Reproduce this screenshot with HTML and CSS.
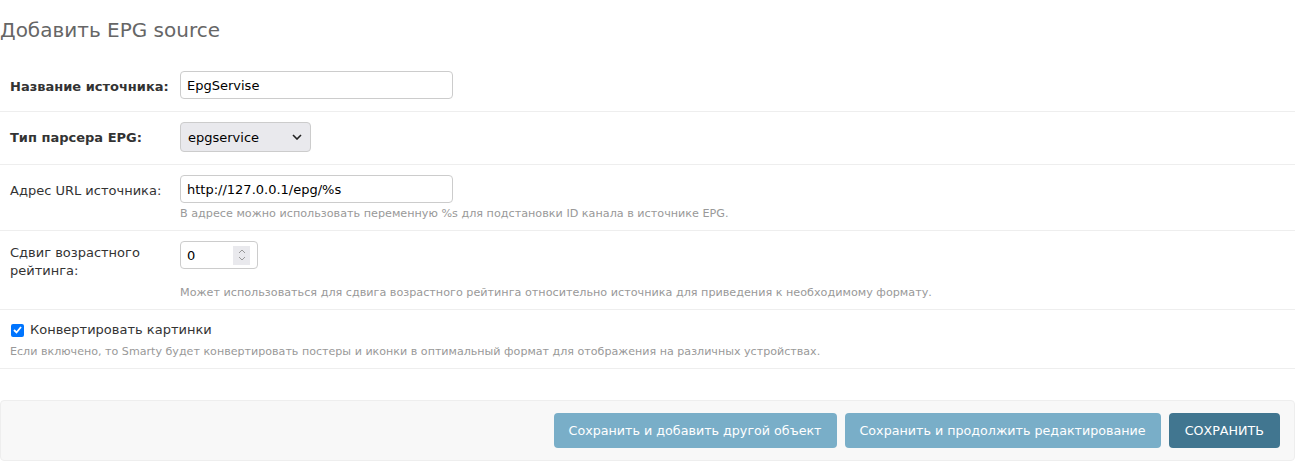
FILE: index.html
```html
<!DOCTYPE html>
<html lang="ru">
<head>
    <meta charset="UTF-8">
    <title>Добавить EPG source</title>
    <link rel="stylesheet" href="styles.css">
</head>
<body>
    <h1>Добавить EPG source</h1>
    <form class="add-form">
        <fieldset class="module">
            <div class="form-row">
                <div class="field">
                    <label class="required" for="id_name">Название источника:</label>
                    <input type="text" id="id_name" class="vTextField" value="EpgServise">
                </div>
            </div>
            <div class="form-row">
                <div class="field">
                    <label class="required" for="id_parser">Тип парсера EPG:</label>
                    <div class="select-box">
                        <span>epgservice</span>
                        <svg class="chevron" width="10" height="6" viewBox="0 0 10 6"><path d="M1 1l4 4 4-4" fill="none" stroke="#222" stroke-width="1.6"/></svg>
                    </div>
                </div>
            </div>
            <div class="form-row">
                <div class="field">
                    <label for="id_url">Адрес URL источника:</label>
                    <input type="text" id="id_url" class="vTextField" value="http://127.0.0.1/epg/%s">
                </div>
                <div class="help">В адресе можно использовать переменную %s для подстановки ID канала в источнике EPG.</div>
            </div>
            <div class="form-row">
                <div class="field">
                    <label class="multiline" for="id_shift">Сдвиг возрастного рейтинга:</label>
                    <div class="number-box">
                        <span>0</span>
                        <div class="spinner">
                            <svg width="8" height="14" viewBox="0 0 8 14"><path d="M1 5l3-3 3 3M1 9l3 3 3-3" fill="none" stroke="#999" stroke-width="1"/></svg>
                        </div>
                    </div>
                </div>
                <div class="help">Может использоваться для сдвига возрастного рейтинга относительно источника для приведения к необходимому формату.</div>
            </div>
            <div class="form-row">
                <div class="checkbox-row">
                    <span class="checkbox">
                        <svg width="9" height="8" viewBox="0 0 9 8"><path d="M1 4l2.5 2.5L8 1" fill="none" stroke="#fff" stroke-width="1.8"/></svg>
                    </span>
                    <label class="vCheckboxLabel">Конвертировать картинки</label>
                </div>
                <div class="help help-wide">Если включено, то Smarty будет конвертировать постеры и иконки в оптимальный формат для отображения на различных устройствах.</div>
            </div>
        </fieldset>

        <div class="submit-row">
            <button type="button" class="btn">Сохранить и добавить другой объект</button>
            <button type="button" class="btn">Сохранить и продолжить редактирование</button>
            <button type="button" class="btn default">СОХРАНИТЬ</button>
        </div>
    </form>
</body>
</html>
```

FILE: styles.css
```css
body {
    margin: 0;
    font-family: "DejaVu Sans", Verdana, sans-serif;
    font-size: 13px;
    color: #333;
    background: #fff;
}

h1 {
    margin: 18px 0 19px 0;
    font-size: 20px;
    font-weight: normal;
    line-height: 24px;
    color: #666;
}

fieldset {
    margin: 0;
    padding: 0;
    border: none;
}

.form-row {
    padding: 10px;
    border-bottom: 1px solid #eee;
}

.field {
    display: flex;
    align-items: flex-start;
}

.field label {
    width: 170px;
    padding: 7px 10px 0 0;
    flex-shrink: 0;
    box-sizing: border-box;
    line-height: 18px;
}

.field label.multiline {
    padding: 3px 10px 4px 0;
}

label.required {
    font-weight: bold;
    color: #333;
}

.vTextField {
    width: 273px;
    height: 28px;
    margin: 0 0 2px 0;
    box-sizing: border-box;
    padding: 4px 6px;
    border: 1px solid #ccc;
    border-radius: 4px;
    font-family: "DejaVu Sans", Verdana, sans-serif;
    font-size: 13px;
    color: #000;
}

.select-box {
    width: 131px;
    height: 30px;
    margin-bottom: 2px;
    box-sizing: border-box;
    display: flex;
    align-items: center;
    justify-content: space-between;
    padding: 0 8px 0 7px;
    background: #e9e9ed;
    border: 1px solid #ccc;
    border-radius: 4px;
    color: #000;
}

.number-box {
    width: 78px;
    height: 28px;
    box-sizing: border-box;
    display: flex;
    align-items: center;
    justify-content: space-between;
    padding: 0 7px 0 6px;
    border: 1px solid #ccc;
    border-radius: 4px;
    color: #000;
}

.spinner {
    width: 17px;
    height: 19px;
    background: #e9e9ed;
    display: flex;
    align-items: center;
    justify-content: center;
}

.help {
    margin-left: 170px;
    padding-top: 2px;
    font-size: 11.2px;
    line-height: 13px;
    color: #999;
}

.help-wide {
    margin-left: 0;
    padding-top: 5px;
    font-size: 11.1px;
}

.checkbox-row {
    display: flex;
    align-items: center;
    height: 20px;
}

.checkbox {
    width: 13px;
    height: 13px;
    box-sizing: border-box;
    border-radius: 2px;
    background: #0075ff;
    display: flex;
    align-items: center;
    justify-content: center;
    margin: 0 6px 0 1px;
}

.vCheckboxLabel {
    line-height: 18px;
}

.submit-row {
    margin-top: 31px;
    padding: 12px 14px;
    background: #f8f8f8;
    border: 1px solid #eee;
    border-radius: 4px;
    display: flex;
    justify-content: flex-end;
    gap: 8px;
}

.btn {
    height: 35px;
    padding: 0 15px;
    border: none;
    border-radius: 4px;
    background: #79aec8;
    color: #fff;
    font-family: "DejaVu Sans", Verdana, sans-serif;
    font-size: 12.7px;
    cursor: pointer;
}

.btn.default {
    padding: 0 16px;
    background: #417690;
}
```
